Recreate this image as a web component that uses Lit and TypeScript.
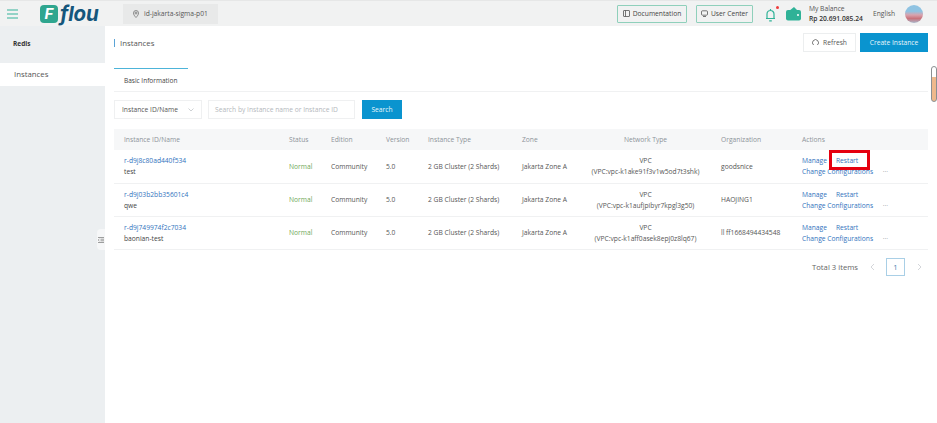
import { LitElement, html, css, nothing } from "lit";
import { customElement } from "lit/decorators.js";

const rows = [
  { id: "r-d9j8c80ad440f534", name: "test", vpc: "(VPC:vpc-k1ake91f3v1w5od7t3shk)", org: "goodsnice", marked: true },
  { id: "r-d9j03b2bb35601c4", name: "qwe", vpc: "(VPC:vpc-k1aufjpibyr7kpgl3g50)", org: "HAOJING1", marked: false },
  { id: "r-d9j749974f2c7034", name: "baonian-test", vpc: "(VPC:vpc-k1aff0asek8epj0z8lq67)", org: "ll ff1668494434548", marked: false },
];

@customElement("app-root")
export class AppRoot extends LitElement {
  static styles = css`
    :host {
      display: block;
      height: 423px;
      overflow: hidden;
      position: relative;
      font-family: "Open Sans", "Noto Sans", sans-serif;
      font-size: 6.7px;
      line-height: 11px;
      color: #444;
      background: #fff;
    }
    a { color: #3173bd; text-decoration: none; }

    .top {
      height: 26px;
      box-sizing: border-box;
      display: flex;
      align-items: center;
      background: #f1f2f2;
      border-top: 1px solid #e6e7e7;
    }
    .burger { margin-left: 7px; width: 11px; height: 10px; }
    .logo { margin-left: 22px; display: flex; align-items: center; width: 83px; }
    .logo-mark {
      width: 18px;
      height: 18px;
      border-radius: 4px;
      background: #2fa68f;
      color: #fff;
      font: italic 700 15px/18px "Inter", sans-serif;
      text-align: center;
    }
    .logo-text {
      margin-left: 2px;
      color: #14567c;
      font: italic 700 20.5px/18px "Inter", sans-serif;
      letter-spacing: -0.2px;
    }
    .region {
      width: 95px;
      height: 20px;
      box-sizing: border-box;
      padding-left: 10px;
      display: flex;
      align-items: center;
      gap: 5px;
      background: #e8e9e9;
      color: #555;
    }
    .spacer { flex: 1; }
    .link-btn {
      height: 18px;
      box-sizing: border-box;
      display: flex;
      align-items: center;
      justify-content: center;
      gap: 3px;
      border: 1px solid #8fd0bb;
      border-radius: 1px;
      color: #444;
    }
    .doc { width: 70px; margin-right: 9px; }
    .user { width: 57px; margin-right: 12px; }
    .bell { position: relative; width: 14px; height: 16px; margin-right: 7px; }
    .bell i {
      position: absolute;
      right: 0;
      top: 0;
      width: 3px;
      height: 3px;
      border-radius: 50%;
      background: #ee3b3b;
    }
    .wallet { width: 15px; height: 15px; margin-right: 8px; }
    .balance { width: 64px; line-height: 9.5px; color: #555; }
    .balance b { display: block; font-weight: 600; color: #333; }
    .lang { width: 32px; color: #555; }
    .avatar {
      width: 18px;
      height: 18px;
      border-radius: 50%;
      margin-right: 14px;
      background: linear-gradient(180deg, #8fc3e2 0 35%, #d9a3ae 55%, #c9737c 75%, #a9b8cc 100%);
    }

    .body { display: flex; height: 397px; }
    .side { width: 105px; flex: none; background: #eceff1; }
    .side-title { padding: 12px 13px 0; height: 25px; font-weight: 700; color: #333; font-size: 6.5px; }
    .side-item {
      height: 23px;
      padding-left: 14px;
      display: flex;
      align-items: center;
      background: #fff;
      font-size: 7.8px;
      color: #555;
    }
    .handle {
      position: absolute;
      left: 97px;
      top: 229px;
      width: 8px;
      height: 21px;
      border-radius: 4px 0 0 4px;
      background: #f6f7f8;
      display: flex;
      align-items: center;
      justify-content: center;
    }

    .main { flex: 1; padding: 7px 9px 0; }
    .head { display: flex; align-items: center; height: 19px; }
    .head-title {
      flex: 1;
      margin-top: 1px;
      border-left: 1px solid #5aa3d6;
      padding-left: 5px;
      font-size: 7.8px;
      line-height: 8px;
      color: #555;
    }
    .btn {
      height: 19px;
      box-sizing: border-box;
      display: flex;
      align-items: center;
      justify-content: center;
      gap: 4px;
    }
    .refresh { width: 53px; margin-right: 4px; border: 1px solid #eceeef; color: #555; }
    .create { width: 68px; background: #0a94cf; color: #e8f6fc; }

    .tabs { margin-top: 16px; height: 23px; border-bottom: 1px solid #f0f1f2; }
    .tab {
      width: 74px;
      height: 23px;
      box-sizing: border-box;
      border-top: 1.5px solid #4db4d9;
      padding: 6px 0 0 10px;
      font-weight: 500;
      font-size: 6.5px;
      color: #444;
    }

    .filters { display: flex; margin-top: 8px; height: 19px; }
    .select {
      width: 88px;
      box-sizing: border-box;
      border: 1px solid #eff0f1;
      padding: 0 7px;
      margin-right: 6px;
      display: flex;
      align-items: center;
      justify-content: space-between;
      color: #555;
    }
    .search {
      width: 147px;
      box-sizing: border-box;
      border: 1px solid #eff0f1;
      padding-left: 6px;
      margin-right: 7px;
      display: flex;
      align-items: center;
      color: #b4b8bc;
    }
    .go { width: 40px; background: #0a94cf; color: #e8f6fc; }

    table { margin-top: 10px; width: 814px; border-collapse: collapse; table-layout: fixed; }
    th {
      height: 20px;
      padding: 0 0 1px 10px;
      background: #f6f7f8;
      text-align: left;
      font-weight: 400;
      color: #8d9399;
    }
    td { padding: 0 0 0 10px; border-bottom: 1px solid #f0f1f2; color: #555; }
    tbody tr { height: 33px; }
    th.net { padding: 0 0 1px; text-align: center; }
    td.net { padding: 0; text-align: center; }
    .normal { color: #6fa85a; }
    .name { color: #444; }
    .acts { display: flex; gap: 9px; position: relative; }
    .acts .mark {
      position: absolute;
      left: 27px;
      top: -5px;
      width: 41px;
      height: 20px;
      box-sizing: border-box;
      border: 3px solid #e5000f;
    }
    .acts2 { display: flex; justify-content: space-between; width: 86px; }
    .more { color: #8d9399; }

    .pager {
      display: flex;
      justify-content: flex-end;
      align-items: center;
      height: 19px;
      margin-top: 8px;
      font-size: 7.7px;
      color: #666;
    }
    .arrow { width: 5px; height: 8px; }
    .page {
      width: 19px;
      height: 18px;
      box-sizing: border-box;
      border: 1px solid #a9cfe6;
      display: flex;
      align-items: center;
      justify-content: center;
      margin: 0 12px 0 11px;
      color: #4a7fb0;
    }
    .total { margin-right: 12px; }
    .arrow.last { margin-right: 6px; }

    .scroll {
      position: absolute;
      left: 931px;
      top: 66px;
      width: 6px;
      height: 36px;
      box-sizing: border-box;
      border: 1px solid #8b8f92;
      border-radius: 3px;
      background: linear-gradient(180deg, #fff 0 30%, #efb98c 30% 100%);
    }
  `;

  render() {
    return html`
      <div class="top">
        <svg class="burger" viewBox="0 0 11 10" fill="none" stroke="#35b39a" stroke-width="1">
          <path d="M0 1h11M0 5h11M0 9h11" />
        </svg>
        <div class="logo"><span class="logo-mark">F</span><span class="logo-text">flou</span></div>
        <div class="region">
          <svg width="6" height="8" viewBox="0 0 6 8" fill="none" stroke="#666" stroke-width=".7">
            <path d="M3 7.5C1.4 5.8.5 4.5.5 3a2.5 2.5 0 0 1 5 0c0 1.5-.9 2.8-2.5 4.5z" />
            <circle cx="3" cy="3" r="1" />
          </svg>
          id-jakarta-sigma-p01
        </div>
        <div class="spacer"></div>
        <div class="link-btn doc">
          <svg width="7" height="7" viewBox="0 0 7 7" fill="none" stroke="#555" stroke-width=".8">
            <rect x=".5" y=".5" width="6" height="6" rx=".5" /><path d="M2.5.5v6" />
          </svg>
          Documentation
        </div>
        <div class="link-btn user">
          <svg width="7" height="7" viewBox="0 0 7 7" fill="none" stroke="#555" stroke-width=".8">
            <rect x=".5" y=".8" width="6" height="4.4" rx="1" /><path d="M2 6.5h3" />
          </svg>
          User Center
        </div>
        <div class="bell">
          <svg width="11" height="14" viewBox="0 0 11 14" fill="none" stroke="#2fb297" stroke-width="1.2" style="margin-top:2px">
            <path d="M1 10.5h9M2 10.5V6a3.5 3.5 0 0 1 7 0v4.5M4.2 12.8h2.6M5.5 1v1.4" />
          </svg>
          <i></i>
        </div>
        <svg class="wallet" viewBox="0 0 15 15">
          <path d="M3 5l5-4 4 4z" fill="#2fb297" />
          <rect y="4" width="15" height="10.5" rx="2" fill="#2fb297" />
          <rect x="11" y="8" width="2" height="2" rx="1" fill="#fff" />
        </svg>
        <div class="balance">My Balance<b>Rp 20.691.085.24</b></div>
        <div class="lang">English</div>
        <div class="avatar"></div>
      </div>

      <div class="body">
        <div class="side">
          <div class="side-title">Redis</div>
          <div class="side-item">Instances</div>
        </div>
        <div class="main">
          <div class="head">
            <div class="head-title">Instances</div>
            <div class="btn refresh">
              <svg width="7" height="7" viewBox="0 0 7 7" fill="none" stroke="#555" stroke-width=".8">
                <path d="M1.6 6A3 3 0 1 1 5.4 6" />
              </svg>
              Refresh
            </div>
            <div class="btn create">Create Instance</div>
          </div>
          <div class="tabs"><div class="tab">Basic Information</div></div>
          <div class="filters">
            <div class="select">
              Instance ID/Name
              <svg width="6" height="4" viewBox="0 0 6 4" fill="none" stroke="#b9bdc1" stroke-width=".7"><path d="M.5.5 3 3 5.5.5" /></svg>
            </div>
            <div class="search">Search by Instance name or Instance ID</div>
            <div class="btn go">Search</div>
          </div>
          <table>
            <colgroup>
              <col style="width:165px" /><col style="width:42px" /><col style="width:55px" />
              <col style="width:42px" /><col style="width:94px" /><col style="width:68px" />
              <col style="width:131px" /><col style="width:81px" /><col style="width:136px" />
            </colgroup>
            <thead>
              <tr>
                <th>Instance ID/Name</th><th>Status</th><th>Edition</th><th>Version</th>
                <th>Instance Type</th><th>Zone</th><th class="net">Network Type</th>
                <th>Organization</th><th>Actions</th>
              </tr>
            </thead>
            <tbody>
              ${rows.map(
                (r) => html`
                  <tr>
                    <td><a>${r.id}</a><div class="name">${r.name}</div></td>
                    <td class="normal">Normal</td>
                    <td>Community</td>
                    <td>5.0</td>
                    <td>2 GB Cluster (2 Shards)</td>
                    <td>Jakarta Zone A</td>
                    <td class="net">VPC<br />${r.vpc}</td>
                    <td>${r.org}</td>
                    <td>
                      <div class="acts">
                        <a>Manage</a><a>Restart</a>
                        ${r.marked ? html`<span class="mark"></span>` : nothing}
                      </div>
                      <div class="acts2"><a>Change Configurations</a><span class="more">···</span></div>
                    </td>
                  </tr>
                `
              )}
            </tbody>
          </table>
          <div class="pager">
            <span class="total">Total 3 items</span>
            <svg class="arrow" viewBox="0 0 5 8" fill="none" stroke="#c9ccd0" stroke-width=".8"><path d="M4 1 1 4l3 3" /></svg>
            <span class="page">1</span>
            <svg class="arrow last" viewBox="0 0 5 8" fill="none" stroke="#c9ccd0" stroke-width=".8"><path d="m1 1 3 3-3 3" /></svg>
          </div>
        </div>
      </div>

      <div class="handle">
        <svg width="6" height="6" viewBox="0 0 6 6" fill="none" stroke="#777" stroke-width=".7">
          <path d="M0 .5h6M2.5 2.2H6M2.5 3.8H6M0 5.5h6M1.4 2 .2 3l1.2 1" />
        </svg>
      </div>
      <div class="scroll"></div>
    `;
  }
}
